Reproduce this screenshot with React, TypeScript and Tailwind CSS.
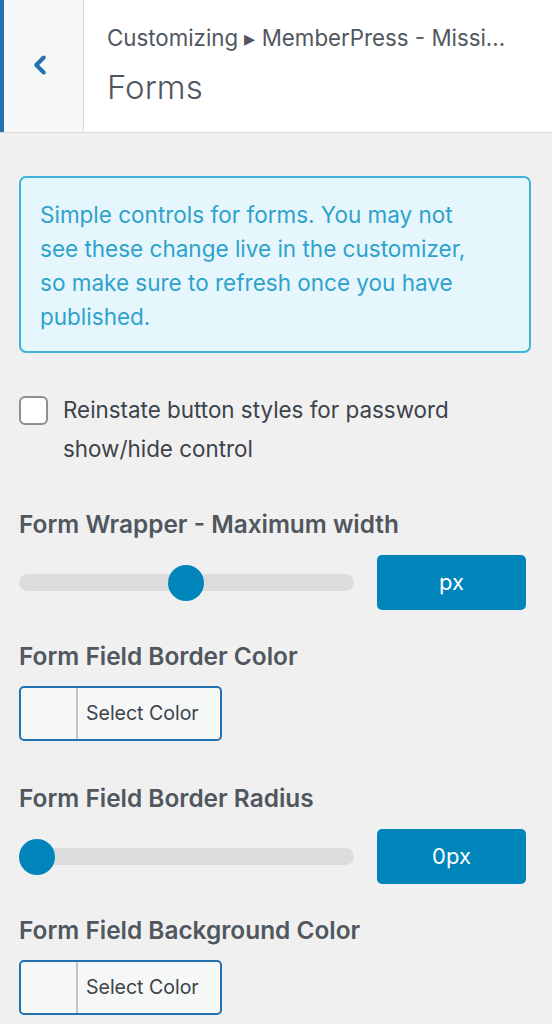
import { ChevronLeft } from 'lucide-react'

function Slider({ pos }: { pos: number }) {
  return (
    <div className="relative flex-1 h-[36px] flex items-center">
      <div className="w-full h-[17px] rounded-full bg-[#dcdcde]" />
      <div className="absolute top-0 w-[36px] h-[36px] rounded-full bg-[#0085ba]" style={{ left: pos }} />
    </div>
  )
}

function RangeRow({ pos, value }: { pos: number; value: string }) {
  return (
    <div className="flex items-center gap-[23px] mt-[16px] mr-[5px]">
      <Slider pos={pos} />
      <div className="w-[149px] h-[55px] rounded-[5px] bg-[#0085ba] flex items-center justify-center text-white text-[22px]">{value}</div>
    </div>
  )
}

function ColorButton() {
  return (
    <div className="mt-[15px] w-[203px] h-[55px] flex rounded-[5px] border-2 border-[#2271b1] bg-[#f6f7f7] overflow-hidden">
      <div className="w-[57px] border-r-2 border-[#c3c4c7]" />
      <div className="flex-1 flex items-center pl-[8px] text-[19.5px] text-[#3c434a]">Select Color</div>
    </div>
  )
}

function Label({ children }: { children: string }) {
  return <div className="text-[24.4px] font-semibold text-[#50575e] leading-[30px]">{children}</div>
}

export default function App() {
  return (
    <div className="w-[552px] h-[1024px] overflow-hidden bg-[#f0f0f1] font-['Inter','Liberation_Sans',sans-serif]">
      <div className="flex h-[133px] bg-white border-b border-[#dcdcde]">
        <div className="w-[4px] bg-[#2271b1]" />
        <div className="w-[80px] bg-[#f6f7f7] border-r border-[#dcdcde] flex items-center justify-center">
          <ChevronLeft size={30} strokeWidth={3.2} className="text-[#2271b1] mt-[-2px] -ml-[8px]" />
        </div>
        <div className="pl-[23px] pt-[22px]">
          <div className="text-[22.3px] text-[#50575e] leading-[32px] whitespace-nowrap">Customizing ▸ MemberPress - Missi...</div>
          <div className="text-[33px] font-light text-[#50575e] leading-[40px] mt-[13px]">Forms</div>
        </div>
      </div>

      <div className="px-[19px] pr-[21px]">
        <div className="mt-[43px] rounded-[7px] border-2 border-[#3fb4d6] bg-[#e5f7fc] pl-[19px] pr-[44px] pt-[20px] pb-[17px] text-[22.5px] leading-[34px] text-[#2ea2cc]">
          Simple controls for forms. You may not see these change live in the customizer, so make sure to refresh once you have published.
        </div>

        <div className="mt-[40px] flex items-start gap-[15px]">
          <div className="mt-[3px] w-[29px] h-[29px] shrink-0 rounded-[6px] border-2 border-[#8c8f94] bg-white" />
          <div className="text-[22.4px] leading-[39px] text-[#3c434a] -mt-[3px]">Reinstate button styles for password show/hide control</div>
        </div>

        <div className="mt-[41px]"><Label>Form Wrapper - Maximum width</Label></div>
        <RangeRow pos={149} value="px" />

        <div className="mt-[31px]"><Label>Form Field Border Color</Label></div>
        <ColorButton />

        <div className="mt-[42px]"><Label>Form Field Border Radius</Label></div>
        <RangeRow pos={0} value="0px" />

        <div className="mt-[31px]"><Label>Form Field Background Color</Label></div>
        <ColorButton />
      </div>
    </div>
  )
}
